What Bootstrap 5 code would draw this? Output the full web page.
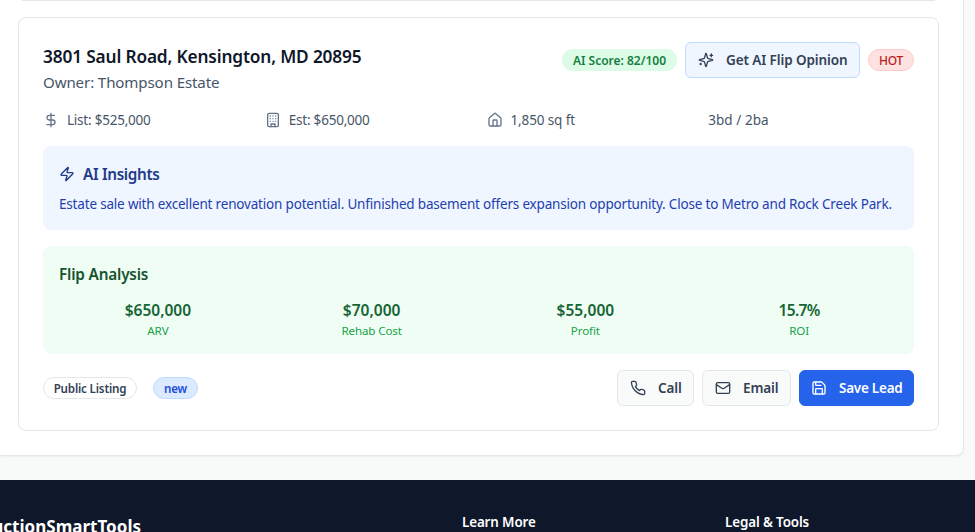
<!DOCTYPE html>
<html lang="en">
<head>
<meta charset="utf-8">
<meta name="viewport" content="width=device-width, initial-scale=1">
<title>Lead details</title>
<link rel="stylesheet" href="https://cdn.jsdelivr.net/npm/bootstrap@5.3.0/dist/css/bootstrap.min.css">
<style>
  body { font-family: "Noto Sans", "Open Sans", sans-serif; background: #f8fafa; color: #475569; height: 532px; overflow: hidden; }
  svg { fill: none; stroke: currentColor; stroke-width: 2; stroke-linecap: round; stroke-linejoin: round; width: 16px; height: 16px; flex: none; }
  .page-body { height: 480px; margin-left: -7px; margin-right: 11px; padding-bottom: 24px; }
  .panel { height: 100%; padding: 0 24px 24px; border: 1px solid #e5e7eb; border-top: 0; border-radius: 0 0 8px 8px; box-shadow: 0 1px 2px rgba(0,0,0,.05); }
  .lead-prev { height: 1px; margin-bottom: 16px; background: linear-gradient(#e5e7eb,#e5e7eb) center / calc(100% - 8px) 1px no-repeat; }
  .lead-card { height: 414px; padding: 24px; border: 1px solid #e5e7eb; border-radius: 8px; background: #fff; }
  .lead-title { font-size: 17.3px; height: 28px; line-height: 28px; font-weight: 600; color: #0f172a; letter-spacing: -.16px; padding-top: 1px; }
  .owner { font-size: 15.1px; line-height: 24px; letter-spacing: -.12px; }
  .t-sm { font-size: 13.5px; line-height: 20px; letter-spacing: -.182px; }
  .stats { letter-spacing: -.22px; }
  .stats svg { color: #64748b; }
  .area { letter-spacing: -.13px; }
  .beds { letter-spacing: .05px; }
  .pill { display: inline-flex; align-items: center; justify-content: center; height: 22px; border: 1px solid transparent; border-radius: 11px; font-size: 11.6px; font-weight: 600; line-height: 20px; padding-top: 1px; letter-spacing: -.18px; }
  .pill-score { width: 115px; background: #dcfce7; color: #15803d; font-size: 12px; font-weight: 600; letter-spacing: 0; }
  .pill-hot { width: 46px; background: #fee2e2; border-color: #fecaca; color: #b91c1c; font-weight: 500; font-size: 12px; }
  .pill-src { width: 94px; border-color: #e5e7eb; color: #334155; }
  .pill-new { width: 45px; background: #dbeafe; border-color: #bfdbfe; color: #1d4ed8; }
  .act { display: inline-flex; align-items: center; gap: 12px; height: 36px; padding: 0 12px; border: 1px solid #e5e7eb; border-radius: 6px; background: #f9fafa; color: #334155; font-size: 13.5px; font-weight: 600; line-height: 20px; white-space: nowrap; letter-spacing: -.1px; }
  .act-ai { width: 175px; background: #eff6ff; border-color: #bfdbfe; }
  .act-call { width: 77px; }
  .act-email { width: 89px; }
  .act-save { width: 115px; background: #2563eb; border-color: #2563eb; color: #fff; padding: 0 11px; letter-spacing: -.25px; }
  .box { border-radius: 8px; padding: 16px; }
  .box-head { font-size: 15.3px; line-height: 24px; font-weight: 600; letter-spacing: -.18px; }
  .box-blue { background: #eff6ff; color: #1e40af; height: 84px; }
  .box-blue .box-head { color: #1e3a8a; margin-bottom: 8px; letter-spacing: -.34px; }
  .box-green { background: #f0fdf4; color: #166534; height: 108px; }
  .box-green .box-head { color: #14532d; margin-bottom: 12px; }
  .val { font-size: 15.5px; line-height: 24px; font-weight: 600; }
  .val-roi { letter-spacing: -.6px; }
  .cap { font-size: 11.6px; line-height: 16px; color: #16a34a; letter-spacing: -.12px; padding-top: 1px; }
  .foot { height: 52px; background: #0f172a; color: #fff; padding: 32px 0 0; overflow: hidden; }
  .foot .row { --bs-gutter-x: 32px; width: 1052px; margin-left: -80px; }
  .brand { font-size: 17.05px; line-height: 28px; font-weight: 700; padding-top: 1px; }
  .foot-head { font-size: 13.4px; line-height: 20px; font-weight: 600; letter-spacing: -.12px; }
</style>
</head>
<body>
<main class="page-body">
  <section class="panel bg-white">
    <div class="lead-prev"></div>
    <article class="lead-card">
      <div class="d-flex justify-content-between align-items-start mb-3">
        <div>
          <h3 class="lead-title m-0">3801 Saul Road, Kensington, MD 20895</h3>
          <div class="owner">Owner: Thompson Estate</div>
        </div>
        <div class="d-flex align-items-center gap-2">
          <span class="pill pill-score">AI Score: 82/100</span>
          <button class="act act-ai"><svg viewBox="0 0 24 24"><path d="M9.937 15.5A2 2 0 0 0 8.5 14.063l-6.135-1.582a.5.5 0 0 1 0-.962L8.5 9.936A2 2 0 0 0 9.937 8.5l1.582-6.135a.5.5 0 0 1 .963 0L14.063 8.5A2 2 0 0 0 15.5 9.937l6.135 1.581a.5.5 0 0 1 0 .964L15.5 14.063a2 2 0 0 0-1.437 1.437l-1.582 6.135a.5.5 0 0 1-.963 0z"/><path d="M20 3v4M22 5h-4M4 17v2M5 18H3"/></svg>Get AI Flip Opinion</button>
          <span class="pill pill-hot">HOT</span>
        </div>
      </div>
      <div class="row gx-3 t-sm stats mb-3">
        <div class="col-3 d-flex align-items-center gap-2"><svg viewBox="0 0 24 24"><path d="M12 2v20M17 5H9.5a3.5 3.5 0 0 0 0 7h5a3.5 3.5 0 0 1 0 7H6"/></svg><span>List: $525,000</span></div>
        <div class="col-3 d-flex align-items-center gap-2"><svg viewBox="0 0 24 24"><rect width="16" height="20" x="4" y="2" rx="2"/><path d="M9 22v-4h6v4M8 6h.01M16 6h.01M12 6h.01M12 10h.01M12 14h.01M16 10h.01M16 14h.01M8 10h.01M8 14h.01"/></svg><span>Est: $650,000</span></div>
        <div class="col-3 d-flex align-items-center gap-2"><svg viewBox="0 0 24 24"><path d="M15 21v-8a1 1 0 0 0-1-1h-4a1 1 0 0 0-1 1v8"/><path d="M3 10a2 2 0 0 1 .709-1.528l7-5.999a2 2 0 0 1 2.582 0l7 5.999A2 2 0 0 1 21 10v9a2 2 0 0 1-2 2H5a2 2 0 0 1-2-2z"/></svg><span class="area">1,850 sq ft</span></div>
        <div class="col-3 beds">3bd / 2ba</div>
      </div>
      <div class="box box-blue mb-3">
        <div class="box-head d-flex align-items-center gap-2"><svg viewBox="0 0 24 24"><path d="M4 14a1 1 0 0 1-.78-1.63l9.9-10.2a.5.5 0 0 1 .86.46l-1.92 6.02A1 1 0 0 0 13 10h7a1 1 0 0 1 .78 1.63l-9.9 10.2a.5.5 0 0 1-.86-.46l1.92-6.02A1 1 0 0 0 11 14z"/></svg><span>AI Insights</span></div>
        <div class="t-sm text-nowrap">Estate sale with excellent renovation potential. Unfinished basement offers expansion opportunity. Close to Metro and Rock Creek Park.</div>
      </div>
      <div class="box box-green mb-3">
        <div class="box-head">Flip Analysis</div>
        <div class="row gx-3 text-center">
          <div class="col-3"><div class="val">$650,000</div><div class="cap">ARV</div></div>
          <div class="col-3"><div class="val">$70,000</div><div class="cap">Rehab Cost</div></div>
          <div class="col-3"><div class="val">$55,000</div><div class="cap">Profit</div></div>
          <div class="col-3"><div class="val val-roi">15.7%</div><div class="cap">ROI</div></div>
        </div>
      </div>
      <div class="d-flex justify-content-between align-items-center">
        <div class="d-flex align-items-center gap-3">
          <span class="pill pill-src">Public Listing</span>
          <span class="pill pill-new">new</span>
        </div>
        <div class="d-flex gap-2">
          <button class="act act-call"><svg viewBox="0 0 24 24"><path d="M22 16.92v3a2 2 0 0 1-2.18 2 19.79 19.79 0 0 1-8.63-3.07 19.5 19.5 0 0 1-6-6 19.79 19.79 0 0 1-3.07-8.67A2 2 0 0 1 4.11 2h3a2 2 0 0 1 2 1.72 12.84 12.84 0 0 0 .7 2.81 2 2 0 0 1-.45 2.11L8.09 9.91a16 16 0 0 0 6 6l1.27-1.27a2 2 0 0 1 2.11-.45 12.84 12.84 0 0 0 2.81.7A2 2 0 0 1 22 16.92z"/></svg>Call</button>
          <button class="act act-email"><svg viewBox="0 0 24 24"><rect width="20" height="16" x="2" y="4" rx="2"/><path d="m22 7-8.97 5.7a1.94 1.94 0 0 1-2.06 0L2 7"/></svg>Email</button>
          <button class="act act-save"><svg viewBox="0 0 24 24"><path d="M15.2 3a2 2 0 0 1 1.4.6l3.8 3.8a2 2 0 0 1 .6 1.4V19a2 2 0 0 1-2 2H5a2 2 0 0 1-2-2V5a2 2 0 0 1 2-2z"/><path d="M17 21v-7a1 1 0 0 0-1-1H8a1 1 0 0 0-1 1v7M7 3v4a1 1 0 0 0 1 1h7"/></svg>Save Lead</button>
        </div>
      </div>
    </article>
  </section>
</main>
<footer class="foot">
  <div class="row">
    <div class="col-6 brand">ConstructionSmartTools</div>
    <div class="col-3 foot-head">Learn More</div>
    <div class="col-3 foot-head">Legal &amp; Tools</div>
  </div>
</footer>
<script src="https://cdn.jsdelivr.net/npm/bootstrap@5.3.0/dist/js/bootstrap.bundle.min.js"></script>
</body>
</html>
